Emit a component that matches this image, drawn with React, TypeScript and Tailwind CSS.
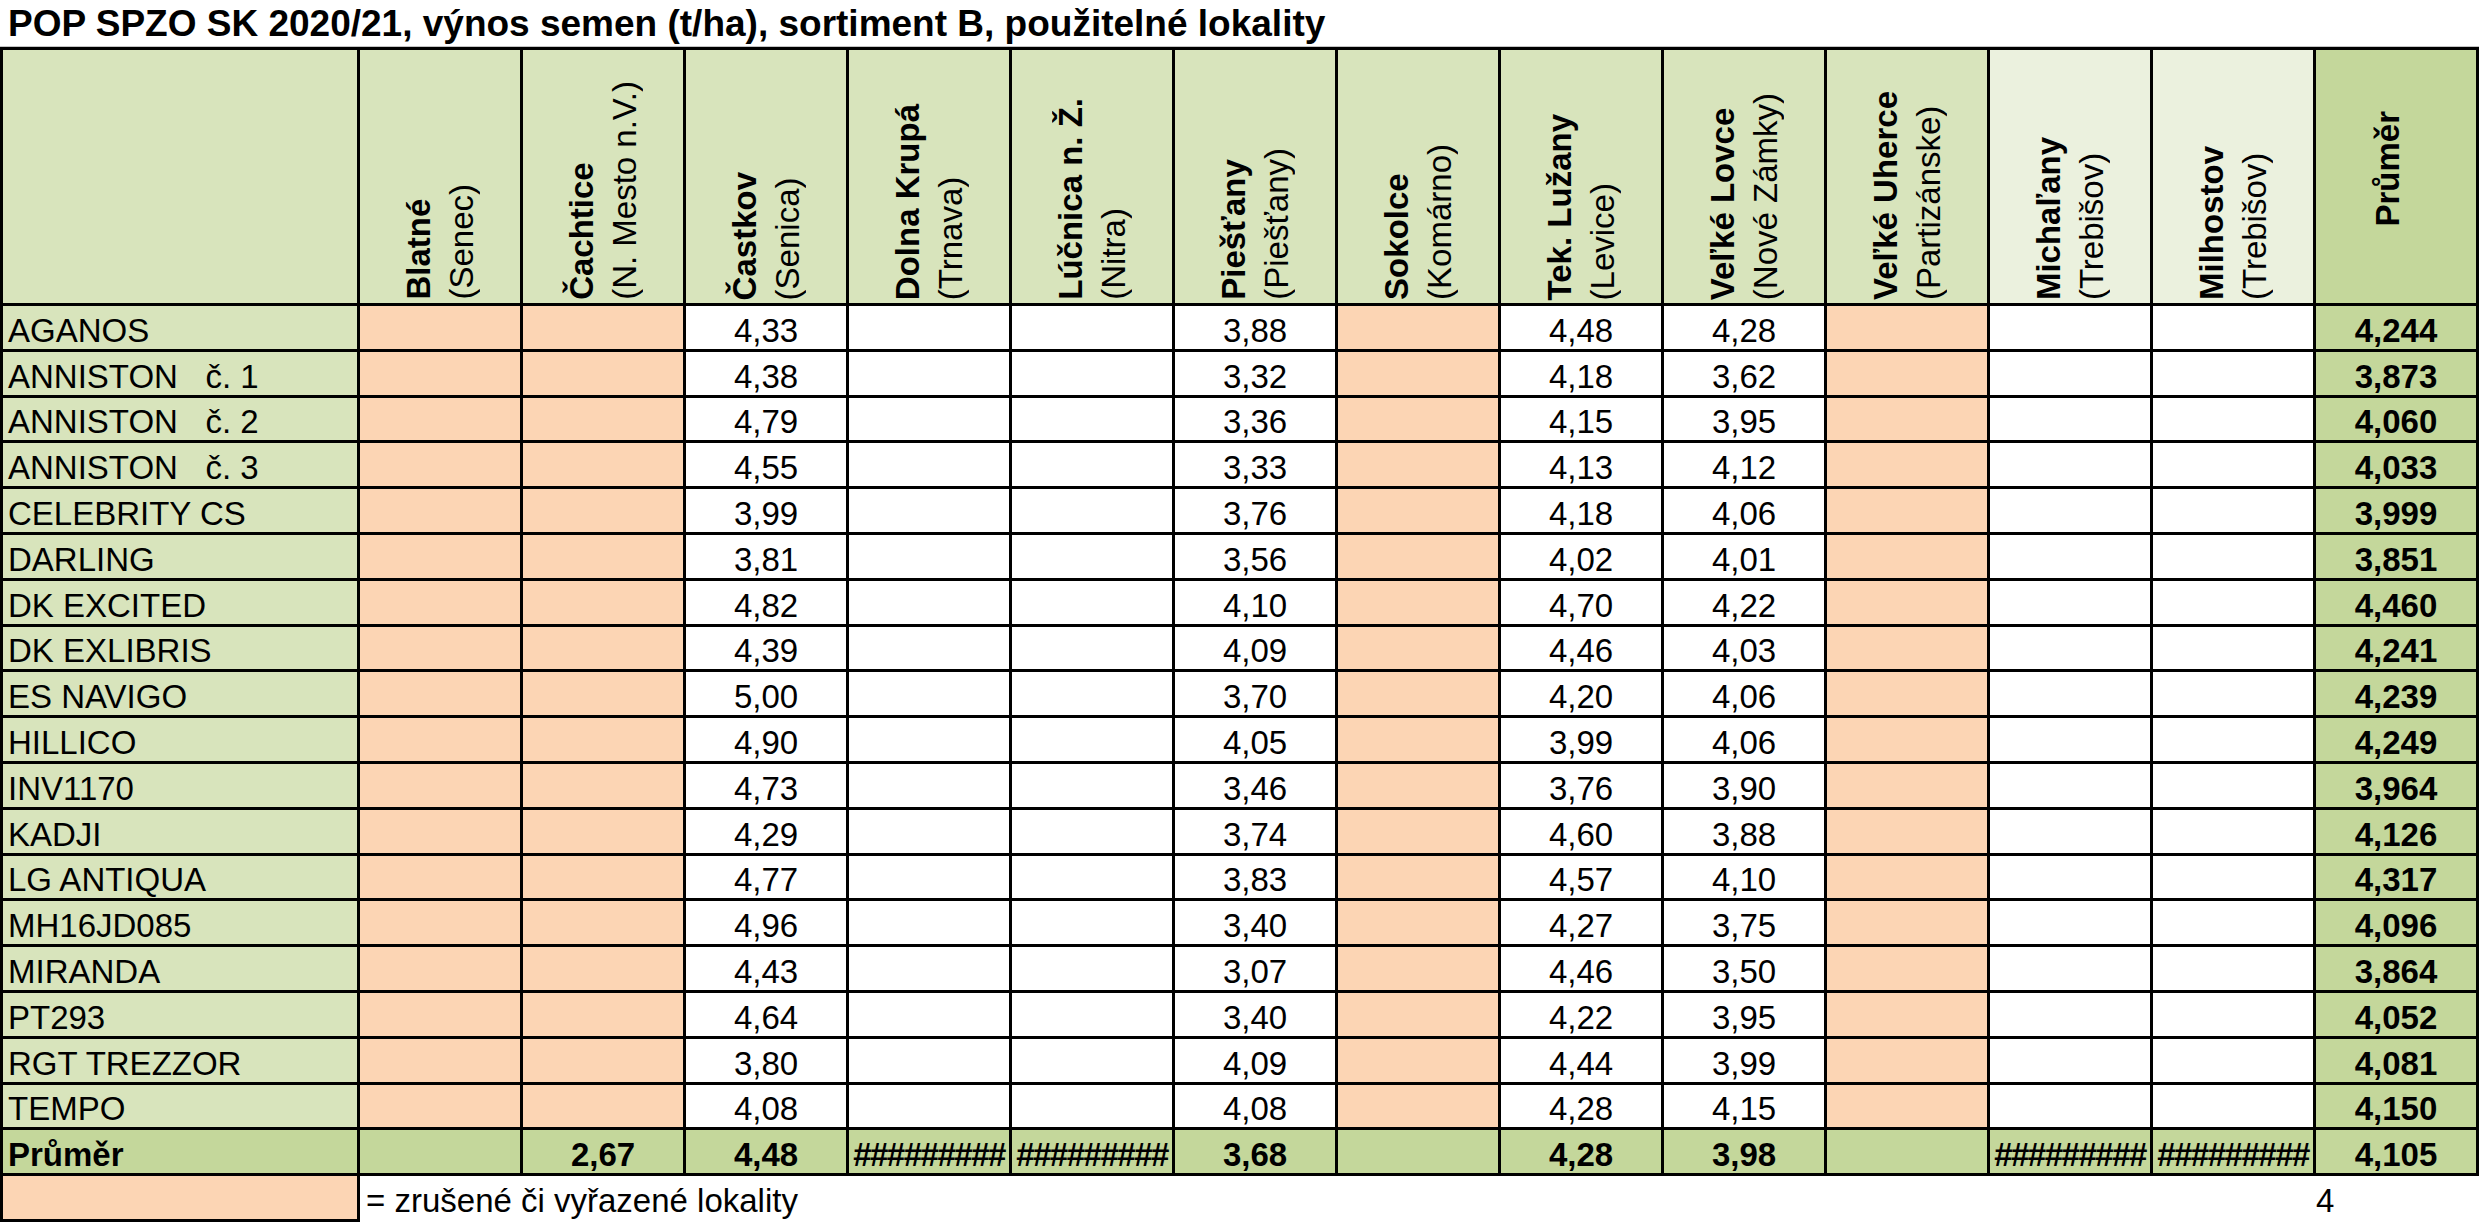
import React from 'react'

const cols = [
  { name: 'Blatné', sub: '(Senec)', kind: 'x' },
  { name: 'Čachtice', sub: '(N. Mesto n.V.)', kind: 'x' },
  { name: 'Častkov', sub: '(Senica)', kind: 'v' },
  { name: 'Dolna Krupá', sub: '(Trnava)', kind: 'e' },
  { name: 'Lúčnica n. Ž.', sub: '(Nitra)', kind: 'e' },
  { name: 'Piešťany', sub: '(Piešťany)', kind: 'v' },
  { name: 'Sokolce', sub: '(Komárno)', kind: 'x' },
  { name: 'Tek. Lužany', sub: '(Levice)', kind: 'v' },
  { name: 'Veľké Lovce', sub: '(Nové Zámky)', kind: 'v' },
  { name: 'Veľké Uherce', sub: '(Partizánske)', kind: 'x' },
  { name: 'Michaľany', sub: '(Trebišov)', kind: 'e', light: true },
  { name: 'Milhostov', sub: '(Trebišov)', kind: 'e', light: true },
]

// values: Častkov, Piešťany, Tek. Lužany, Veľké Lovce, průměr
const rows: [string, string, string, string, string, string][] = [
  ['AGANOS', '4,33', '3,88', '4,48', '4,28', '4,244'],
  ['ANNISTON   č. 1', '4,38', '3,32', '4,18', '3,62', '3,873'],
  ['ANNISTON   č. 2', '4,79', '3,36', '4,15', '3,95', '4,060'],
  ['ANNISTON   č. 3', '4,55', '3,33', '4,13', '4,12', '4,033'],
  ['CELEBRITY CS', '3,99', '3,76', '4,18', '4,06', '3,999'],
  ['DARLING', '3,81', '3,56', '4,02', '4,01', '3,851'],
  ['DK EXCITED', '4,82', '4,10', '4,70', '4,22', '4,460'],
  ['DK EXLIBRIS', '4,39', '4,09', '4,46', '4,03', '4,241'],
  ['ES NAVIGO', '5,00', '3,70', '4,20', '4,06', '4,239'],
  ['HILLICO', '4,90', '4,05', '3,99', '4,06', '4,249'],
  ['INV1170', '4,73', '3,46', '3,76', '3,90', '3,964'],
  ['KADJI', '4,29', '3,74', '4,60', '3,88', '4,126'],
  ['LG ANTIQUA', '4,77', '3,83', '4,57', '4,10', '4,317'],
  ['MH16JD085', '4,96', '3,40', '4,27', '3,75', '4,096'],
  ['MIRANDA', '4,43', '3,07', '4,46', '3,50', '3,864'],
  ['PT293', '4,64', '3,40', '4,22', '3,95', '4,052'],
  ['RGT TREZZOR', '3,80', '4,09', '4,44', '3,99', '4,081'],
  ['TEMPO', '4,08', '4,08', '4,28', '4,15', '4,150'],
]

const avgRow = ['', '2,67', '4,48', '#', '#', '3,68', '', '4,28', '3,98', '', '#', '#']

const valueCols = [2, 5, 7, 8]

function Hashes() {
  return <span className="whitespace-nowrap tracking-[-1.5px]">#########</span>
}

export default function App() {
  return (
    <main className="h-[1229px] overflow-hidden bg-white text-black font-['Liberation_Sans',Arial,sans-serif] text-[33px]">
      <div className="h-[47px] border-b border-[#c4c4c4] pl-[8px] pt-[5px] text-[37px] font-bold leading-[37px] whitespace-nowrap">
        POP SPZO SK 2020/21, výnos semen (t/ha), sortiment B, použitelné lokality
      </div>

      <div className="grid w-[2479px] grid-cols-[354px_repeat(13,160px)] grid-rows-[253px_repeat(19,42.8px)] gap-[3px] bg-black p-[3px] leading-[33px]">
        {/* header */}
        <div className="bg-[#d8e4bc]"></div>
        {cols.map((c) => (
          <div
            key={c.name}
            className={`flex items-end justify-center pb-[3px] ${c.light ? 'bg-[#ebf1de]' : 'bg-[#d8e4bc]'}`}
          >
            <div className="rotate-180 whitespace-nowrap leading-[43px] [writing-mode:vertical-rl]">
              <div className="font-bold">{c.name}</div>
              <div>{c.sub}</div>
            </div>
          </div>
        ))}
        <div className="flex items-center justify-center bg-[#c4d79b] pr-[18px] pb-[16px]">
          <div className="rotate-180 font-bold whitespace-nowrap leading-[43px] [writing-mode:vertical-rl]">
            Průměr
          </div>
        </div>

        {/* data rows */}
        {rows.map((r) => (
          <React.Fragment key={r[0]}>
            <div className="flex items-end whitespace-pre bg-[#d8e4bc] pb-[2px] pl-[5px]">{r[0]}</div>
            {cols.map((c, i) => {
              const vi = valueCols.indexOf(i)
              return (
                <div
                  key={c.name}
                  className={`flex items-end justify-center pb-[2px] ${c.kind === 'x' ? 'bg-[#fcd5b4]' : 'bg-white'}`}
                >
                  {vi >= 0 ? r[vi + 1] : ''}
                </div>
              )
            })}
            <div className="flex items-end justify-center bg-[#c4d79b] pb-[2px] font-bold">{r[5]}</div>
          </React.Fragment>
        ))}

        {/* průměr row */}
        <div className="flex items-end bg-[#c4d79b] pb-[2px] pl-[5px] font-bold">Průměr</div>
        {avgRow.map((v, i) => (
          <div key={i} className="flex items-end justify-center bg-[#c4d79b] pb-[2px] font-bold">
            {v === '#' ? <Hashes /> : v}
          </div>
        ))}
        <div className="flex items-end justify-center bg-[#c4d79b] pb-[2px] font-bold">4,105</div>
      </div>

      <div className="flex h-[46px] items-end leading-[33px]">
        <div className="h-[46px] w-[360px] border-x-[3px] border-b-[3px] border-black bg-[#fcd5b4]"></div>
        <div className="pb-[5px] pl-[6px]">= zrušené či vyřazené lokality</div>
        <div className="ml-[1518px] pb-[5px]">4</div>
      </div>
    </main>
  )
}
